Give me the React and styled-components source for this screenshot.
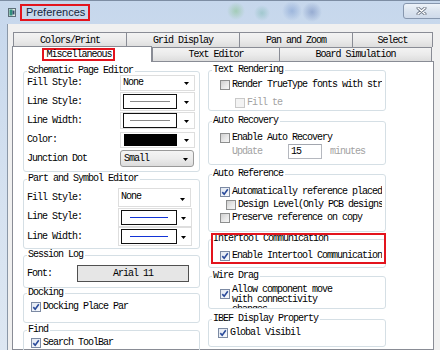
import React from "react";
import styled, { createGlobalStyle } from "styled-components";

const MONO = `"Liberation Mono", "DejaVu Sans Mono", monospace`;

const Global = createGlobalStyle`
  html, body { margin: 0; padding: 0; background: #f0f0f0; }
  body { width: 440px; height: 350px; overflow: hidden; }
  * { box-sizing: border-box; }
`;

const Window = styled.div`
  width: 440px;
  height: 350px;
  overflow: hidden;
  display: flex;
  flex-direction: column;
  border-top: 1px solid #7d8da3;
  background:
    radial-gradient(circle at 236px 10px, rgba(120, 190, 120, 0.45) 0, rgba(120, 190, 120, 0) 9px),
    radial-gradient(circle at 262px 12px, rgba(90, 170, 150, 0.35) 0, rgba(90, 170, 150, 0) 8px),
    radial-gradient(circle at 292px 10px, rgba(80, 120, 190, 0.35) 0, rgba(80, 120, 190, 0) 10px),
    radial-gradient(circle at 312px 11px, rgba(60, 90, 160, 0.35) 0, rgba(60, 90, 160, 0) 10px),
    linear-gradient(180deg, #c6d7ec 0%, #d6e2f0 60%, #dde7f2 100%);
`;

const TitleBar = styled.div`
  height: 23px;
  flex: none;
  display: flex;
  align-items: flex-start;
  padding-left: 8px;
`;

const AppIcon = styled.svg`
  width: 8px;
  height: 9px;
  margin-top: 7px;
  flex: none;
`;

const TitleText = styled.span`
  margin: 3px 0 0 4px;
  border: 2px solid #e3141d;
  padding: 0 3px 0 4px;
  font-family: "Liberation Sans", Arial, sans-serif;
  font-size: 11px;
  line-height: 13px;
  color: #15263d;
`;

const CloseButton = styled.div`
  margin: 2px -4px 0 auto;
  width: 41px;
  height: 16px;
  border: 1px solid #8797ae;
  border-radius: 3px;
  background: linear-gradient(180deg, #eef3f9 0%, #dbe4ef 50%, #cfdaea 100%);
  display: flex;
  align-items: center;
  justify-content: center;
  padding-right: 4px;
`;

const Body = styled.div`
  flex: 1;
  display: flex;
  min-height: 0;
`;

const Client = styled.div`
  flex: 1;
  margin-left: 7px;
  border-left: 1px solid #8b98a8;
  background: #f0f0f0;
  padding: 8px 6px 0 4px;
  display: flex;
  flex-direction: column;
  min-height: 0;
`;

const TabRow = styled.div`
  display: flex;
  height: ${(p) => p.$h}px;
  padding-left: ${(p) => p.$pl}px;
  flex: none;
  align-items: flex-start;
`;

const Tab = styled.div`
  width: ${(p) => p.$w}px;
  height: ${(p) => (p.$selected ? 16 : p.$th)}px;
  margin-left: ${(p) => p.$ml || 0}px;
  margin-top: ${(p) => (p.$selected ? -1 : 0)}px;
  position: relative;
  z-index: ${(p) => (p.$selected ? 2 : 0)};
  border: 1px solid #898c95;
  border-bottom: none;
  background: ${(p) =>
    p.$selected ? "#ffffff" : "linear-gradient(180deg, #f3f3f3 0%, #ebebeb 50%, #dddddd 100%)"};
  display: flex;
  align-items: center;
  justify-content: center;
  font-family: ${MONO};
  font-size: 10px;
  letter-spacing: -1px;
  color: #000;
  white-space: nowrap;
`;

const TabMark = styled.span`
  border: 2px solid #e3141d;
  padding: 0 1px 0 2px;
  line-height: 9px;
  margin-left: -7px;
`;

const Page = styled.div`
  flex: 1;
  background: #fff;
  border: 1px solid #898c95;
  padding: 7px 0 0 10px;
  display: grid;
  grid-template-columns: 177px 178px;
  column-gap: 8px;
  align-items: start;
  min-height: 0;
`;

const Column = styled.div`
  display: flex;
  flex-direction: column;
`;

const Group = styled.fieldset`
  margin: ${(p) => p.$mt || 0}px 0 0 0;
  height: ${(p) => p.$h}px;
  min-width: 0;
  border: 1px solid #d5dfe5;
  border-radius: 3px;
  padding: 0 3px;
`;

const Legend = styled.legend`
  font-family: ${MONO};
  font-size: 10px;
  letter-spacing: -1px;
  line-height: 4px;
  padding: 0 2px 0 1px;
  color: #000;
  white-space: nowrap;
`;

const Rows = styled.div`
  display: grid;
  grid-template-columns: ${(p) => p.$cols};
  grid-auto-rows: ${(p) => p.$rh}px;
  align-items: center;
  margin-top: ${(p) => p.$mt}px;
`;

const Label = styled.span`
  font-family: ${MONO};
  font-size: 10px;
  letter-spacing: -1px;
  color: ${(p) => (p.$disabled ? "#a2a2a2" : "#000")};
  white-space: nowrap;
  line-height: 10px;
`;

const Combo = styled.div`
  width: ${(p) => p.$w}px;
  height: ${(p) => p.$h}px;
  border: 1px solid #dedede;
  background: #fff;
  display: flex;
  align-items: ${(p) => (p.$top ? "flex-start" : "center")};
  padding: ${(p) => (p.$top ? "3px 0 0 2px" : "0 0 0 2px")};
`;

const ArrowIcon = styled.svg`
  width: 5px;
  height: 3px;
  margin: ${(p) => (p.$top ? "6px" : "2px")} 5px 0 auto;
  flex: none;
`;

const Arrow = ({ $top }) => (
  <ArrowIcon $top={$top} viewBox="0 0 5 3">
    <polygon points="0,0 5,0 2.5,3" fill="#000" />
  </ArrowIcon>
);

const Swatch = styled.div`
  width: ${(p) => p.$w}px;
  height: 15px;
  border: 1px solid #111;
  display: flex;
  align-items: center;
  padding: 0 ${(p) => p.$pad}px;
  flex: none;
`;

const LineMark = styled.div`
  flex: 1;
  height: 1px;
  background: ${(p) => p.$color};
`;

const ColorSwatch = styled.div`
  width: 53px;
  height: 12px;
  background: #000;
  margin-left: 1px;
  flex: none;
`;

const DropButton = styled.div`
  width: 74px;
  height: 17px;
  border: 1px solid #9a9a9a;
  border-radius: 3px;
  background: linear-gradient(180deg, #f4f4f4 0%, #ececec 50%, #dcdcdc 100%);
  display: flex;
  align-items: center;
  padding-left: 3px;
`;

const FlexRow = styled.div`
  display: flex;
  align-items: center;
  height: ${(p) => p.$h}px;
  margin-top: ${(p) => p.$mt}px;
  padding-left: ${(p) => p.$indent}px;
`;

const FontLabel = styled(Label)`
  width: 50px;
`;

const FontButton = styled.div`
  width: 112px;
  height: 17px;
  border: 1px solid #505050;
  background: #e6e6e6;
  display: flex;
  align-items: center;
  justify-content: center;
`;

const CheckRow = styled.div`
  display: flex;
  align-items: center;
  gap: 2px;
  height: ${(p) => p.$h || 12}px;
  margin-top: ${(p) => p.$mt || 0}px;
  padding-left: ${(p) => p.$indent}px;
  overflow: hidden;
`;

const Box = styled.span`
  width: 10px;
  height: 10px;
  flex: none;
  border: 1px solid ${(p) => (p.$disabled ? "#c9c9c9" : p.$checked ? "#7c8aa3" : "#8e8f8f")};
  background: ${(p) =>
    p.$disabled
      ? "#f3f3f3"
      : p.$checked
      ? "linear-gradient(135deg, #e2e8f2 0%, #f7f9fc 100%)"
      : "linear-gradient(135deg, #cfcfcf 0%, #eaeaea 60%, #f6f6f6 100%)"};
  display: flex;
  align-items: center;
  justify-content: center;
`;

const CheckSvg = styled.svg`
  width: 8px;
  height: 8px;
`;

const Check = ({ checked, disabled }) => (
  <Box $checked={checked} $disabled={disabled}>
    {checked && (
      <CheckSvg viewBox="0 0 8 8">
        <path d="M1.3 4.1 L3.2 6.2 L6.8 1.3" fill="none" stroke="#2a4b9b" strokeWidth="1.6" />
      </CheckSvg>
    )}
  </Box>
);

const MultiText = styled.div`
  display: flex;
  flex-direction: column;
  font-family: ${MONO};
  font-size: 10px;
  letter-spacing: -1px;
  line-height: 10px;
  color: #000;
  white-space: nowrap;
  margin-top: 12px;
`;

const NumInput = styled.div`
  width: 34px;
  height: 15px;
  margin-left: 26px;
  border: 1px solid #b5b8bf;
  border-top-color: #a2a6ae;
  background: #fff;
  display: flex;
  align-items: center;
  padding-left: 2px;
`;

const Unit = styled(Label)`
  margin-left: 8px;
`;

const HighlightWrap = styled.div`
  position: relative;
  margin-top: ${(p) => p.$mt}px;
  display: flex;
  flex-direction: column;
`;

const Highlight = styled.div`
  position: absolute;
  left: 3px;
  top: -4px;
  width: 175px;
  height: 31px;
  border: 2px solid #e3141d;
  pointer-events: none;
`;

const CheckItem = ({ text, checked, disabled, indent, mt, h }) => (
  <CheckRow $indent={indent} $mt={mt} $h={h}>
    <Check checked={checked} disabled={disabled} />
    <Label $disabled={disabled}>{text}</Label>
  </CheckRow>
);

export default function App() {
  return (
    <>
      <Global />
      <Window>
        <TitleBar>
          <AppIcon viewBox="0 0 8 9">
            <rect x="0.5" y="0.5" width="7" height="8" fill="#dfe8e4" stroke="#5d6f7a" />
            <rect x="1.5" y="1.5" width="3" height="6" fill="#2f8f7c" />
            <rect x="4.5" y="2.5" width="2" height="4" fill="#36506e" />
          </AppIcon>
          <TitleText>Preferences</TitleText>
          <CloseButton>
            <svg width="13" height="8" viewBox="0 0 13 8">
              <path d="M3 1 L10 7 M10 1 L3 7" stroke="#6d7786" strokeWidth="3" strokeLinecap="round" />
              <path d="M3 1 L10 7 M10 1 L3 7" stroke="#ffffff" strokeWidth="1.4" strokeLinecap="round" />
            </svg>
          </CloseButton>
        </TitleBar>
        <Body>
          <Client>
            <TabRow $h={15} $pl={1}>
              <Tab $w={114} $th={15}>Colors/Print</Tab>
              <Tab $w={114} $th={15} $ml={-1}>Grid Display</Tab>
              <Tab $w={114} $th={15} $ml={-1}>Pan and Zoom</Tab>
              <Tab $w={81} $th={15} $ml={-1}>Select</Tab>
            </TabRow>
            <TabRow $h={14} $pl={0}>
              <Tab $w={140} $selected>
                <TabMark>Miscellaneous</TabMark>
              </Tab>
              <Tab $w={128} $th={14}>Text Editor</Tab>
              <Tab $w={153} $th={14} $ml={-1}>Board Simulation</Tab>
            </TabRow>
            <Page>
              <Column>
                <Group $h={103}>
                  <Legend>Schematic Page Editor</Legend>
                  <Rows $cols="93px 75px" $rh={19} $mt={0}>
                    <Label>Fill Style:</Label>
                    <Combo $w={75} $h={16}>
                      <Label>None</Label>
                      <Arrow />
                    </Combo>
                    <Label>Line Style:</Label>
                    <Combo $w={75} $h={19}>
                      <Swatch $w={54} $pad={6}>
                        <LineMark $color="#8a8a8a" />
                      </Swatch>
                      <Arrow />
                    </Combo>
                    <Label>Line Width:</Label>
                    <Combo $w={75} $h={17}>
                      <Swatch $w={54} $pad={6}>
                        <LineMark $color="#8a8a8a" />
                      </Swatch>
                      <Arrow />
                    </Combo>
                    <Label>Color:</Label>
                    <Combo $w={75} $h={16}>
                      <ColorSwatch />
                      <Arrow />
                    </Combo>
                    <Label>Junction Dot</Label>
                    <DropButton>
                      <Label>Small</Label>
                      <Arrow />
                    </DropButton>
                  </Rows>
                </Group>
                <Group $mt={5} $h={72}>
                  <Legend>Part and Symbol Editor</Legend>
                  <Rows $cols="91px 73px" $rh={19.5} $mt={7}>
                    <Label>Fill Style:</Label>
                    <Combo $w={73} $h={19} $top>
                      <Label>None</Label>
                      <Arrow $top />
                    </Combo>
                    <Label>Line Style:</Label>
                    <Combo $w={74} $h={19}>
                      <Swatch $w={56} $pad={8}>
                        <LineMark $color="#1233d6" />
                      </Swatch>
                      <Arrow />
                    </Combo>
                    <Label>Line Width:</Label>
                    <Combo $w={74} $h={19}>
                      <Swatch $w={56} $pad={8}>
                        <LineMark $color="#1233d6" />
                      </Swatch>
                      <Arrow />
                    </Combo>
                  </Rows>
                </Group>
                <Group $mt={4} $h={35}>
                  <Legend>Session Log</Legend>
                  <FlexRow $h={17} $mt={8} $indent={0}>
                    <FontLabel>Font:</FontLabel>
                    <FontButton>
                      <Label>Arial 11</Label>
                    </FontButton>
                  </FlexRow>
                </Group>
                <Group $mt={3} $h={32}>
                  <Legend>Docking</Legend>
                  <CheckItem text="Docking Place Par" checked indent={4} mt={6} />
                </Group>
                <Group $mt={5} $h={40}>
                  <Legend>Find</Legend>
                  <CheckItem text="Search ToolBar" checked indent={4} mt={5} />
                </Group>
              </Column>
              <Column>
                <Group $mt={-1} $h={43}>
                  <Legend>Text Rendering</Legend>
                  <CheckItem text="Render TrueType fonts with str" indent={8} mt={7} />
                  <CheckItem text="Fill te" disabled indent={23} mt={6} />
                </Group>
                <Group $mt={8} $h={46}>
                  <Legend>Auto Recovery</Legend>
                  <CheckItem text="Enable Auto Recovery" indent={8} mt={9} />
                  <FlexRow $h={15} $mt={0} $indent={20}>
                    <Label $disabled>Update</Label>
                    <NumInput>
                      <Label>15</Label>
                    </NumInput>
                    <Unit $disabled>minutes</Unit>
                  </FlexRow>
                </Group>
                <Group $mt={7} $h={60}>
                  <Legend>Auto Reference</Legend>
                  <CheckItem text="Automatically reference placed" checked indent={8} mt={10} />
                  <CheckItem text="Design Level(Only PCB designs" indent={14} mt={1} />
                  <CheckItem text="Preserve reference on copy" indent={8} mt={1} />
                </Group>
                <HighlightWrap $mt={5}>
                  <Group $h={31}>
                    <Legend>Intertool Communication</Legend>
                    <CheckItem text="Enable Intertool Communication" checked indent={8} mt={9} />
                  </Group>
                  <Highlight />
                </HighlightWrap>
                <Group $mt={6} $h={35}>
                  <Legend>Wire Drag</Legend>
                  <CheckRow $indent={8} $mt={1} $h={29}>
                    <Check checked />
                    <MultiText>
                      <span>Allow component move</span>
                      <span>with connectivity</span>
                      <span>changes</span>
                    </MultiText>
                  </CheckRow>
                </Group>
                <Group $mt={8} $h={30}>
                  <Legend>IBEF Display Property</Legend>
                  <CheckItem text="Global Visibil" checked indent={6} mt={6} />
                </Group>
              </Column>
            </Page>
          </Client>
        </Body>
      </Window>
    </>
  );
}
